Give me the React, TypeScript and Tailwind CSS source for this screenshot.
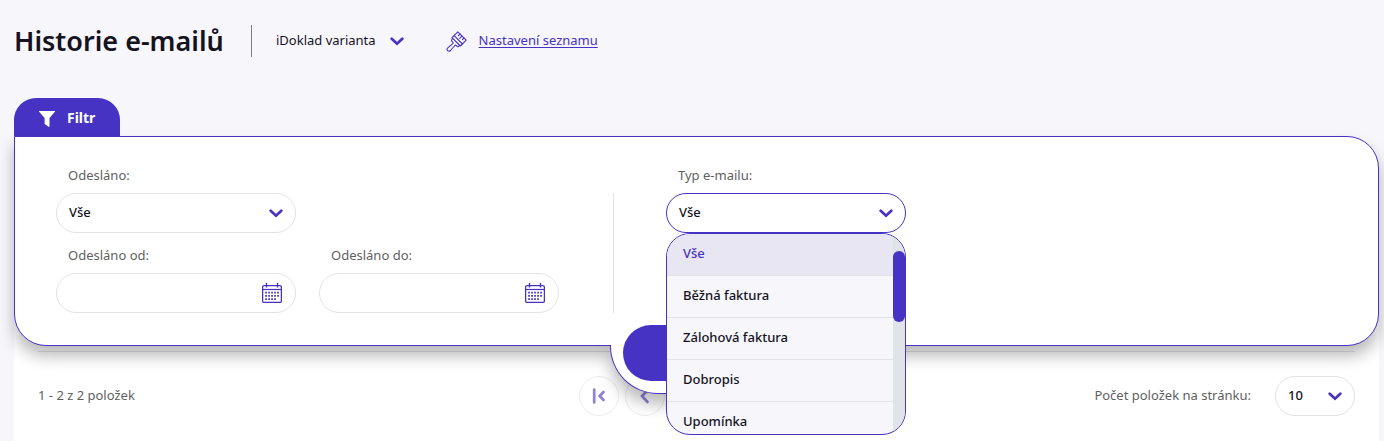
import { useState } from "react";

const EMAIL_TYPES = ["Vše", "Běžná faktura", "Zálohová faktura", "Dobropis", "Upomínka"];

function Chevron({ className = "" }: { className?: string }) {
  return (
    <svg className={className} width="14" height="9" viewBox="0 0 14 9" fill="none" aria-hidden="true">
      <path d="M1.7 1.7 7 6.7l5.3-5" stroke="#4632c3" strokeWidth="2.7" strokeLinecap="round" />
    </svg>
  );
}

function BrushIcon() {
  return (
    <svg width="21" height="21" viewBox="0 0 21 21" fill="none" stroke="#4632c3" strokeWidth="1.1" strokeLinejoin="round" strokeLinecap="round" aria-hidden="true">
      <path d="M11.8 0.8 20.2 9.2 14.4 15 6 6.600z" />
      <path d="M8.200 4.600l8.200 8.400" />
      <path d="M14 3l-1.600 1.600M16 5l-2.300 2.300M18 7l-1.600 1.600" />
      <path d="M6.800 7.400 5.800 8.500c-.5.600-.4 1.100 0 1.600l1 1.100c.4.400.4.900 0 1.400l-5 4.200c-2 2 .7 4.700 2.700 2.700l4.400-5c.4-.4.900-.4 1.300 0l1 .9c.500.500 1 .5 1.500 0l1-1" />
    </svg>
  );
}

function CalendarIcon() {
  return (
    <svg width="20" height="20" viewBox="0 0 20 20" fill="none" aria-hidden="true">
      <rect x="0.6" y="2.6" width="18.8" height="16.8" rx="1.5" stroke="#4632c3" strokeWidth="1.3" />
      <path d="M1 6.500h18" stroke="#4632c3" strokeWidth="1.2" />
      <path d="M4.500 0v4.500M15.500 0v4.500" stroke="#4632c3" strokeWidth="1.4" />
      <path d="M3.200 9.700h14M3.200 12.900h14M3.200 16.100h11" stroke="#4632c3" strokeWidth="1.7" strokeDasharray="1.7 1.3" />
    </svg>
  );
}

function FunnelIcon() {
  return (
    <svg width="16" height="16" viewBox="0 0 16 16" fill="white" aria-hidden="true">
      <path d="M.4 0h15.200c.4 0 .5.400.300.700L10.500 7v8.300c0 .6-.4.800-.9.400L6 13.200c-.3-.2-.4-.4-.4-.8V7L.1.700C-.1.400 0 0 .4 0z" />
    </svg>
  );
}

function DateField({ id, label }: { id: string; label: string }) {
  return (
    <div className="w-60">
      <label htmlFor={id} className="block pl-3 leading-5 text-[#5f5f5f]">{label}</label>
      <div className="mt-2 flex h-10 items-center rounded-full border border-[#e3e3e3] bg-white pr-[13px]">
        <input id={id} type="text" className="h-full min-w-0 flex-1 rounded-full bg-transparent pl-3 text-[#15131f] outline-none" />
        <button type="button" aria-label={`Vybrat datum – ${label}`} className="cursor-pointer">
          <CalendarIcon />
        </button>
      </div>
    </div>
  );
}

function SelectBox({ id, options, className }: { id: string; options: string[]; className: string }) {
  return (
    <div className={`grid items-center ${className}`}>
      <select
        id={id}
        className="col-start-1 row-start-1 h-10 w-full appearance-none rounded-full border border-[#e3e3e3] bg-white pr-8 pl-3 font-medium text-[#15131f] outline-none"
      >
        {options.map((option) => (
          <option key={option}>{option}</option>
        ))}
      </select>
      <Chevron className="pointer-events-none col-start-1 row-start-1 mr-[13px] justify-self-end" />
    </div>
  );
}

function EmailTypeSelect() {
  const [open, setOpen] = useState(true);
  const [selected, setSelected] = useState("Vše");
  return (
    <div className="w-60">
      <label htmlFor="email-type" className="block pl-3 leading-5 text-[#5f5f5f]">Typ e-mailu:</label>
      <div className="relative z-20 mt-2">
        <button
          id="email-type"
          type="button"
          aria-haspopup="listbox"
          aria-expanded={open}
          onClick={() => setOpen(!open)}
          className="flex h-10 w-full items-center justify-between rounded-full border border-[#4632c3] bg-white px-3 font-medium text-[#15131f]"
        >
          {selected}
          <Chevron />
        </button>
        {open && (
          <div className="absolute top-full left-0 flex h-[202px] w-full overflow-hidden rounded-[24px] border border-[#4632c3] bg-[#f7f6fb]">
            <ul role="listbox" aria-label="Typ e-mailu" className="flex-1">
              {EMAIL_TYPES.map((type) => (
                <li
                  key={type}
                  role="option"
                  aria-selected={type === selected}
                  onClick={() => setSelected(type)}
                  className="flex h-[42px] cursor-pointer items-center border-b border-[#e3e3e6] px-4 pb-px font-medium text-[#15131f] aria-selected:bg-[#e7e6f2] aria-selected:text-[#4632c3]"
                >
                  {type}
                </li>
              ))}
            </ul>
            <div className="w-3 bg-[#e0e3e8] pt-[17px]">
              <div className="h-[71px] rounded-full bg-[#4632c3]" />
            </div>
          </div>
        )}
      </div>
    </div>
  );
}

function FilterPanel() {
  return (
    <section className="relative z-10">
      <h2>
        <button type="button" className="flex h-[38px] items-center gap-3 rounded-t-[22px] bg-[#4632c3] px-[25px] text-[14px] font-bold text-white">
          <span className="pt-1"><FunnelIcon /></span>
          Filtr
        </button>
      </h2>
      <form className="relative flex rounded-[32px] rounded-tl-none border border-[#4632c3] bg-white px-[41px] pt-7 pb-8 shadow-[0_10px_16px_rgba(0,0,0,0.28)]">
        <div className="flex flex-col gap-3">
          <div className="w-60">
            <label htmlFor="sent" className="block pl-3 leading-5 text-[#5f5f5f]">Odesláno:</label>
            <SelectBox id="sent" options={["Vše"]} className="mt-2 w-60" />
          </div>
          <div className="flex gap-[23px]">
            <DateField id="sent-from" label="Odesláno od:" />
            <DateField id="sent-to" label="Odesláno do:" />
          </div>
        </div>
        <div className="mt-7 mr-[52px] ml-[54px] w-px bg-[#e3e3e6]" />
        <EmailTypeSelect />
        <div className="absolute -bottom-[49px] left-1/2 h-[49px] w-[174px] -translate-x-1/2 rounded-b-[48px] border border-t-0 border-[#4632c3] bg-white shadow-[0_10px_16px_rgba(0,0,0,0.28)] [clip-path:inset(0_-30px_-30px_-30px)]" />
        <div className="absolute -bottom-px left-1/2 h-px w-[172px] -translate-x-1/2 bg-white" />
        <button type="submit" aria-label="Filtrovat" className="absolute -bottom-9 left-1/2 h-14 w-37 -translate-x-1/2 rounded-full bg-[#4632c3]" />
      </form>
    </section>
  );
}

function PageButton({ label, d }: { label: string; d: string }) {
  return (
    <button type="button" aria-label={label} className="flex size-10 items-center justify-center rounded-full border border-[#ececec] bg-white">
      <svg width="16" height="16" viewBox="0 0 16 16" fill="none" stroke="#8e80dc" strokeWidth="2.7" strokeLinecap="round" aria-hidden="true">
        <path d={d} />
      </svg>
    </button>
  );
}

function Pagination() {
  return (
    <nav aria-label="Stránkování" className="grid grid-cols-[1fr_auto_1fr] items-center border-t border-[#e3e3e6] pt-6 text-[#5f5f5f]">
      <p>1 - 2 z 2 položek</p>
      <div className="flex gap-[6px]">
        <PageButton label="První stránka" d="M3.200 1.500v13M12.500 4 8.700 8l3.800 4" />
        <PageButton label="Předchozí stránka" d="M10.500 2.500 5 8l5.500 6" />
        <span className="w-[51px]" />
        <PageButton label="Další stránka" d="M5.500 2.500 11 8l-5.500 6" />
        <PageButton label="Poslední stránka" d="M12.800 1.500v13M3.500 4l3.800 4-3.800 4" />
      </div>
      <div className="flex items-center justify-end gap-6">
        <label htmlFor="page-size">Počet položek na stránku:</label>
        <SelectBox id="page-size" options={["10", "20", "50"]} className="w-20" />
      </div>
    </nav>
  );
}

export default function App() {
  return (
    <div className="flex min-h-screen flex-col bg-[#f7f6fb] pr-[5px] pl-[14px] font-['Noto_Sans','Open_Sans',sans-serif] text-[13px] text-[#15131f]">
      <header className="flex h-[98px] items-center pb-4">
        <h1 className="w-[213px] text-[27px] leading-9 font-semibold whitespace-nowrap">Historie e-mailů</h1>
        <div className="mr-6 ml-6 h-8 w-px bg-[#7d7b85]" />
        <button type="button" className="flex items-center gap-[14px]">
          iDoklad varianta
          <Chevron />
        </button>
        <a href="#nastaveni" className="ml-[42px] flex items-center gap-3 text-[#4632c3]">
          <BrushIcon />
          <span className="underline underline-offset-2">Nastavení seznamu</span>
        </a>
      </header>
      <FilterPanel />
      <main className="-mt-10 flex-1 bg-white px-6 pt-[45px] pb-6">
        <Pagination />
      </main>
    </div>
  );
}
